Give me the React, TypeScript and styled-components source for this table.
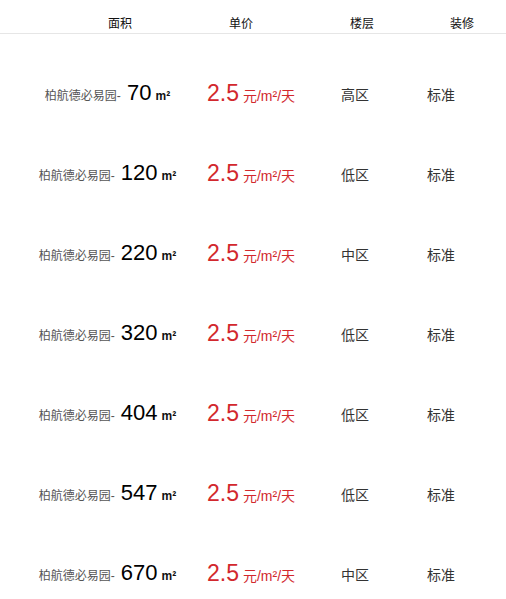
import styled, { createGlobalStyle } from "styled-components";

const GlobalStyle = createGlobalStyle`
  body {
    margin: 0;
    background: #fff;
    font-family: "Liberation Sans", "Noto Sans CJK SC", sans-serif;
  }
`;

interface Listing {
  area: number;
  floor: string;
  decor: string;
}

const listings: Listing[] = [
  { area: 70, floor: "高区", decor: "标准" },
  { area: 120, floor: "低区", decor: "标准" },
  { area: 220, floor: "中区", decor: "标准" },
  { area: 320, floor: "低区", decor: "标准" },
  { area: 404, floor: "低区", decor: "标准" },
  { area: 547, floor: "低区", decor: "标准" },
  { area: 670, floor: "中区", decor: "标准" },
];

const Page = styled.div`
  width: 506px;
`;

const Header = styled.div`
  display: grid;
  grid-template-columns: 120px 122px 120px 80px;
  padding-left: 60px;
  height: 34px;
  align-items: end;
  border-bottom: 1px solid #e6e6e6;
  box-sizing: border-box;
`;

const HeadCell = styled.div`
  text-align: center;
  font-size: 12px;
  color: #111;
  line-height: 16px;
  padding-bottom: 1px;
`;

const List = styled.div`
  padding-top: 19px;
`;

const Row = styled.div`
  display: grid;
  grid-template-columns: 207px 134px 86px 1fr;
  height: 80px;
  align-items: center;
`;

const NameCell = styled.div`
  padding-left: 8px;
  text-align: center;
  white-space: nowrap;
`;

const Prefix = styled.span`
  font-size: 12px;
  color: #555;
`;

const AreaNum = styled.span`
  font-size: 22px;
  color: #000;
`;

const Unit = styled.span`
  font-size: 12px;
  font-weight: bold;
  color: #111;
  margin-left: 4px;
`;

const PriceCell = styled.div`
  white-space: nowrap;
  color: #d2282d;
`;

const PriceNum = styled.span`
  font-size: 23px;
`;

const PriceUnit = styled.span`
  font-size: 14px;
  margin-left: 4px;
`;

const TextCell = styled.div`
  font-size: 14px;
  color: #333;
  padding-top: 2px;
`;

export default function App() {
  return (
    <Page>
      <GlobalStyle />
      <Header>
        <HeadCell>面积</HeadCell>
        <HeadCell>单价</HeadCell>
        <HeadCell>楼层</HeadCell>
        <HeadCell>装修</HeadCell>
      </Header>
      <List>
        {listings.map((l) => (
          <Row key={l.area}>
            <NameCell>
              <Prefix>柏航德必易园-</Prefix>
              <AreaNum> {l.area}</AreaNum>
              <Unit>m²</Unit>
            </NameCell>
            <PriceCell>
              <PriceNum>2.5</PriceNum>
              <PriceUnit>元/m²/天</PriceUnit>
            </PriceCell>
            <TextCell>{l.floor}</TextCell>
            <TextCell>{l.decor}</TextCell>
          </Row>
        ))}
      </List>
    </Page>
  );
}
